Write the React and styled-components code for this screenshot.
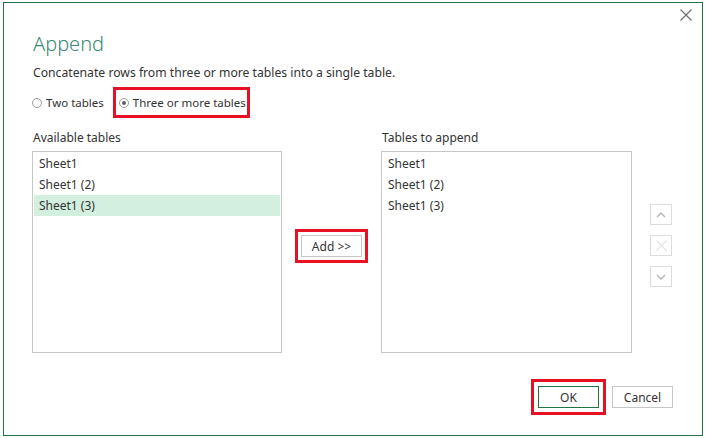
import React from "react";
import styled, { createGlobalStyle } from "styled-components";

const Global = createGlobalStyle`
  html, body { margin: 0; padding: 0; background: #fff; }
  body { font-family: "Noto Sans", "Open Sans", sans-serif; color: #333; }
  * { box-sizing: border-box; }
`;

const Dialog = styled.div`
  margin: 2px 0 0 3px;
  width: 700px;
  height: 434px;
  border: 1px solid #217346;
  background: #fff;
  display: flex;
  flex-direction: column;
`;

const TitleBar = styled.div`
  display: flex;
  justify-content: flex-end;
  padding: 5px 9px 0 0;
  height: 19px;
`;

const CloseButton = styled.button`
  width: 14px;
  height: 14px;
  padding: 0;
  border: none;
  background: transparent;
  display: flex;
  align-items: center;
  justify-content: center;
`;

const Body = styled.div`
  padding: 0 29px 0 28px;
  display: flex;
  flex-direction: column;
`;

const Title = styled.h1`
  margin: 9px 0 0 1px;
  font-size: 20px;
  line-height: 26px;
  font-weight: 300;
  color: #3a8a74;
`;

const Description = styled.p`
  margin: 8px 0 0 1px;
  font-size: 12.2px;
  line-height: 16px;
  color: #333;
`;

const RadioRow = styled.div`
  margin-top: 9px;
  display: flex;
  align-items: center;
  gap: 12px;
`;

const RadioLabel = styled.label`
  display: flex;
  align-items: center;
  gap: 4px;
  font-size: 11.5px;
  line-height: 16px;
  color: #333;
  height: 25px;
  padding: ${(p) => (p.$marked ? "0 1px 0 3px" : "0")};
  outline: ${(p) => (p.$marked ? "3px solid #e81123" : "none")};
`;

const RadioCircle = styled.span`
  width: 10px;
  height: 10px;
  border-radius: 50%;
  border: 1px solid #9a9a9a;
  background: #fff;
  display: flex;
  align-items: center;
  justify-content: center;
  &::after {
    content: "";
    width: 4px;
    height: 4px;
    border-radius: 50%;
    background: ${(p) => (p.$checked ? "#606060" : "transparent")};
  }
`;

const Columns = styled.div`
  margin-top: 15px;
  display: flex;
  align-items: flex-start;
`;

const ListColumn = styled.div`
  width: ${(p) => p.$width}px;
  display: flex;
  flex-direction: column;
`;

const ListLabel = styled.div`
  font-size: 12px;
  line-height: 16px;
  color: #333;
  padding-left: 1px;
  margin-bottom: 5px;
`;

const ListBox = styled.div`
  height: 202px;
  border: 1px solid #c6c6c6;
  padding: 1px;
  display: flex;
  flex-direction: column;
`;

const ListItem = styled.div`
  height: 21px;
  line-height: 21px;
  padding-left: 5px;
  font-size: 12px;
  color: #333;
  background: ${(p) => (p.$selected ? "#d3efdf" : "transparent")};
`;

const AddColumn = styled.div`
  width: 99px;
  padding-top: 105px;
  display: flex;
  justify-content: center;
`;

const Button = styled.button`
  width: 61px;
  height: 22px;
  padding: 0;
  background: #fff;
  border: 1px solid ${(p) => (p.$primary ? "#217346" : "#c6c6c6")};
  font-family: inherit;
  font-size: 12px;
  color: #333;
  outline: ${(p) => (p.$marked ? "3px solid #e81123" : "none")};
  outline-offset: ${(p) => p.$offset || 0}px;
`;

const SideColumn = styled.div`
  padding: 74px 0 0 18px;
  display: flex;
  flex-direction: column;
  gap: 10px;
`;

const SideButton = styled.button`
  width: 22px;
  height: 21px;
  padding: 0;
  border: 1px solid #dcdcdc;
  background: #fff;
  display: flex;
  align-items: center;
  justify-content: center;
`;

const Footer = styled.div`
  margin-top: 33px;
  display: flex;
  justify-content: flex-end;
  gap: 13px;
`;

const items = ["Sheet1", "Sheet1 (2)", "Sheet1 (3)"];

export default function App() {
  return (
    <>
      <Global />
      <Dialog>
        <TitleBar>
          <CloseButton aria-label="Close">
            <svg width="12" height="12" viewBox="0 0 12 12">
              <path d="M0.5 0.5 L11.5 11.5 M11.5 0.5 L0.5 11.5" stroke="#6a6a6a" strokeWidth="1.1" fill="none" />
            </svg>
          </CloseButton>
        </TitleBar>
        <Body>
          <Title>Append</Title>
          <Description>Concatenate rows from three or more tables into a single table.</Description>
          <RadioRow>
            <RadioLabel>
              <RadioCircle />
              Two tables
            </RadioLabel>
            <RadioLabel $marked>
              <RadioCircle $checked />
              Three or more tables
            </RadioLabel>
          </RadioRow>
          <Columns>
            <ListColumn $width={250}>
              <ListLabel>Available tables</ListLabel>
              <ListBox>
                {items.map((it, i) => (
                  <ListItem key={it} $selected={i === 2}>{it}</ListItem>
                ))}
              </ListBox>
            </ListColumn>
            <AddColumn>
              <Button $marked $offset={3}>Add &gt;&gt;</Button>
            </AddColumn>
            <ListColumn $width={251}>
              <ListLabel>Tables to append</ListLabel>
              <ListBox>
                {items.map((it) => (
                  <ListItem key={it}>{it}</ListItem>
                ))}
              </ListBox>
            </ListColumn>
            <SideColumn>
              <SideButton aria-label="Move up">
                <svg width="10" height="6" viewBox="0 0 10 6">
                  <path d="M1 5 L5 1 L9 5" stroke="#b4b4b4" strokeWidth="1.4" fill="none" />
                </svg>
              </SideButton>
              <SideButton aria-label="Remove">
                <svg width="11" height="11" viewBox="0 0 11 11">
                  <path d="M0.5 0.5 L10.5 10.5 M10.5 0.5 L0.5 10.5" stroke="#e4e4e4" strokeWidth="1.2" fill="none" />
                </svg>
              </SideButton>
              <SideButton aria-label="Move down">
                <svg width="10" height="6" viewBox="0 0 10 6">
                  <path d="M1 1 L5 5 L9 1" stroke="#b4b4b4" strokeWidth="1.4" fill="none" />
                </svg>
              </SideButton>
            </SideColumn>
          </Columns>
          <Footer>
            <Button $primary $marked $offset={4}>OK</Button>
            <Button>Cancel</Button>
          </Footer>
        </Body>
      </Dialog>
    </>
  );
}
